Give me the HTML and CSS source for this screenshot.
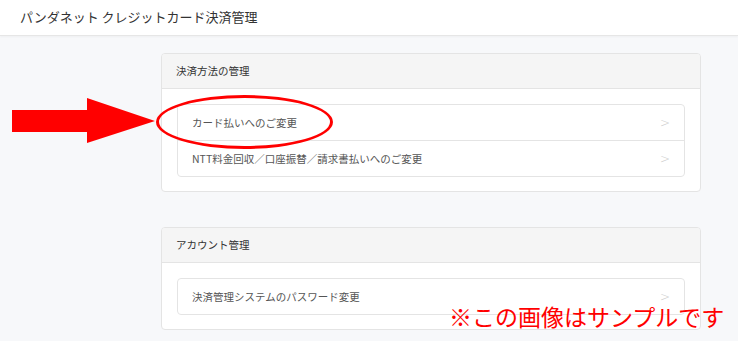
FILE: index.html
```html
<!DOCTYPE html>
<html>

<head>
    <link rel="stylesheet" href="styles.css">
</head>

<body>
    <div class='topbar'>パンダネット クレジットカード決済管理</div>

    <div class='content'>
        <div class='card'>
            <div class='card-head'>決済方法の管理</div>
            <div class='card-body'>
                <div class='list'>
                    <div class='item'><span>カード払いへのご変更</span><span class='chev'>&gt;</span></div>
                    <div class='item'><span>NTT料金回収／口座振替／請求書払いへのご変更</span><span class='chev'>&gt;</span></div>
                </div>
            </div>
        </div>

        <div class='card'>
            <div class='card-head'>アカウント管理</div>
            <div class='card-body'>
                <div class='list'>
                    <div class='item'><span>決済管理システムのパスワード変更</span><span class='chev'>&gt;</span></div>
                </div>
            </div>
        </div>
    </div>

    <svg class='arrow' width='144' height='46' viewBox='0 0 144 46'>
        <polygon points='0,12 75,12 75,0 143,23 75,45 75,34 0,34' fill='#ff0000' />
    </svg>
    <div class='circle'></div>
    <div class='sample'>※この画像はサンプルです</div>
</body>

</html>
```

FILE: styles.css
```css
body {
    font-family: "Noto Sans CJK JP", "Noto Sans", sans-serif;
    background: #f7f8fa;
    margin: 0;
    color: #444;
    overflow: hidden;
}

.topbar {
    background: white;
    height: 35px;
    line-height: 33px;
    padding-left: 20px;
    font-size: 13px;
    color: #333;
    border-bottom: 1px solid #e6e6e6;
    box-shadow: 0 1px 2px rgba(0, 0, 0, 0.04);
}

.content {
    padding: 17px 0 0 161px;
    width: 540px;
}

.card {
    background: white;
    border: 1px solid #e4e4e4;
    border-radius: 4px;
    margin-bottom: 35px;
    overflow: hidden;
}

.card:last-child {
    margin-bottom: 10px;
}

.card-head {
    background: #f5f5f5;
    height: 34px;
    line-height: 34px;
    padding: 0 14px;
    font-size: 10.5px;
    color: #333;
    border-bottom: 1px solid #e4e4e4;
}

.card-body {
    padding: 15px 15px 14px;
}

.list {
    border: 1px solid #e4e4e4;
    border-radius: 4px;
}

.item {
    display: flex;
    justify-content: space-between;
    align-items: center;
    height: 35px;
    padding: 0 14px;
    font-size: 10.5px;
    color: #555;
}

.item + .item {
    border-top: 1px solid #e4e4e4;
}

.chev {
    color: #ccc;
    font-size: 12px;
    font-family: "DejaVu Sans", sans-serif;
    font-weight: 300;
}

.arrow {
    position: absolute;
    left: 12px;
    top: 98px;
}

.circle {
    position: absolute;
    left: 156px;
    top: 95px;
    width: 171px;
    height: 48px;
    border: 3px solid #ff0000;
    border-radius: 50%;
}

.sample {
    position: absolute;
    left: 449px;
    top: 299px;
    font-size: 23px;
    color: #ff0000;
    white-space: nowrap;
}
```
